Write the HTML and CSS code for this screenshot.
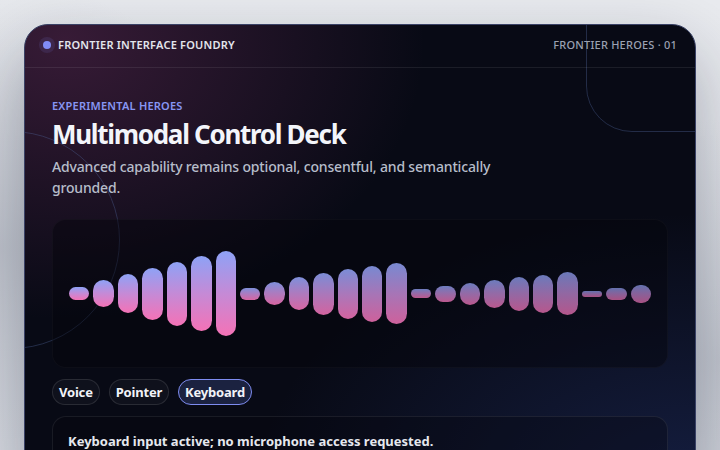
FILE: index.html
```html
<!DOCTYPE html>
<html lang="en">
<head>
<meta charset="utf-8">
<title>Multimodal Control Deck</title>
<link rel="stylesheet" href="styles.css">
</head>
<body>
<main class="card">
  <div class="deco deco-circle"></div>
  <div class="deco deco-rect"></div>
  <header class="card-head">
    <div class="brand"><span class="brand-dot"></span>Frontier Interface Foundry</div>
    <div class="series">Frontier Heroes · 01</div>
  </header>
  <section class="hero">
    <p class="eyebrow">Experimental Heroes</p>
    <h1 class="title">Multimodal Control Deck</h1>
    <p class="lede">Advanced capability remains optional, consentful, and semantically grounded.</p>
    <div class="wave" aria-hidden="true">
      <span class="bar" style="height:13px;opacity:1"></span>
      <span class="bar" style="height:27px;opacity:1"></span>
      <span class="bar" style="height:39px;opacity:1"></span>
      <span class="bar" style="height:52px;opacity:1"></span>
      <span class="bar" style="height:64px;opacity:1"></span>
      <span class="bar" style="height:75px;opacity:1"></span>
      <span class="bar" style="height:85px;opacity:1"></span>
      <span class="bar" style="height:12px;opacity:.88"></span>
      <span class="bar" style="height:23px;opacity:.88"></span>
      <span class="bar" style="height:33px;opacity:.88"></span>
      <span class="bar" style="height:42px;opacity:.86"></span>
      <span class="bar" style="height:50px;opacity:.86"></span>
      <span class="bar" style="height:56px;opacity:.84"></span>
      <span class="bar" style="height:61px;opacity:.84"></span>
      <span class="bar" style="height:9px;opacity:.76"></span>
      <span class="bar" style="height:16px;opacity:.76"></span>
      <span class="bar" style="height:22px;opacity:.75"></span>
      <span class="bar" style="height:28px;opacity:.75"></span>
      <span class="bar" style="height:34px;opacity:.74"></span>
      <span class="bar" style="height:38px;opacity:.74"></span>
      <span class="bar" style="height:43px;opacity:.73"></span>
      <span class="bar" style="height:6px;opacity:.68"></span>
      <span class="bar" style="height:12px;opacity:.68"></span>
      <span class="bar" style="height:18px;opacity:.68"></span>
    </div>
    <div class="modes" role="tablist">
      <button class="mode">Voice</button>
      <button class="mode">Pointer</button>
      <button class="mode is-active">Keyboard</button>
    </div>
    <div class="status">Keyboard input active; no microphone access requested.</div>
  </section>
</main>
</body>
</html>
```

FILE: styles.css
```css
* { box-sizing: border-box; }

html, body {
  margin: 0;
  height: 100%;
  overflow: hidden;
}

body {
  padding: 24px 24px 0;
  font-family: "Noto Sans", "Open Sans", sans-serif;
  background:
    radial-gradient(circle at 0% 55%, rgba(140, 146, 160, 0.4), transparent 35%),
    radial-gradient(circle at 100% 80%, rgba(140, 146, 160, 0.35), transparent 30%),
    linear-gradient(180deg, #e9ebef 0%, #e1e4ea 100%);
}

.card {
  position: relative;
  overflow: hidden;
  width: 672px;
  min-height: 470px;
  border: 1px solid #3a4266;
  border-radius: 24px;
  background:
    radial-gradient(ellipse 360px 280px at 6% 3%, rgba(120, 50, 100, 0.42), transparent 100%),
    radial-gradient(ellipse 440px 280px at 100% 100%, rgba(40, 60, 130, 0.4), transparent 100%),
    #080a15;
  box-shadow: 0 28px 70px rgba(15, 23, 42, 0.32);
  color: #e5e7eb;
}

.deco {
  position: absolute;
  pointer-events: none;
  border: 1px solid rgba(84, 104, 160, 0.36);
}

.deco-circle {
  left: -123px;
  top: 106px;
  width: 218px;
  height: 218px;
  border-radius: 50%;
}

.deco-rect {
  left: 561px;
  top: -133px;
  width: 240px;
  height: 240px;
  border-radius: 46px;
}

.card-head {
  position: relative;
  display: flex;
  align-items: center;
  justify-content: space-between;
  height: 43px;
  padding: 0 18px 3px;
  border-bottom: 1px solid rgba(255, 255, 255, 0.08);
  font-size: 11px;
  letter-spacing: 0.02em;
  text-transform: uppercase;
}

.brand {
  display: flex;
  align-items: center;
  gap: 7px;
  font-weight: 600;
  color: #e3e5ec;
}

.brand-dot {
  width: 8px;
  height: 8px;
  border-radius: 50%;
  background: #818cf8;
  box-shadow: 0 0 0 4px rgba(129, 140, 248, 0.12);
}

.series {
  font-weight: 500;
  color: #9ba1b2;
}

.hero {
  position: relative;
  padding: 30px 27px 27px;
}

.eyebrow {
  margin: 0;
  font-size: 11px;
  line-height: 16px;
  font-weight: 600;
  letter-spacing: 0.02em;
  text-transform: uppercase;
  color: #8796f3;
}

.title {
  margin: 4px 0 0;
  font-size: 26px;
  line-height: 32px;
  font-weight: 700;
  letter-spacing: -0.05em;
  color: #f3f5fa;
}

.lede {
  margin: 6px 0 0;
  max-width: 460px;
  font-size: 14px;
  line-height: 21px;
  font-weight: 500;
  letter-spacing: -0.012em;
  color: #b7bdca;
}

.wave {
  display: flex;
  align-items: center;
  gap: 4px;
  height: 149px;
  margin-top: 21px;
  padding: 0 16px;
  border-radius: 14px;
  border: 1px solid rgba(255, 255, 255, 0.03);
  background: rgba(4, 5, 12, 0.45);
}

.bar {
  flex: 1;
  border-radius: 999px;
  background: linear-gradient(180deg, #8ea2f6 0%, #c58ad6 50%, #f472b6 100%);
}

.modes {
  display: flex;
  gap: 9px;
  margin-top: 11px;
}

.mode {
  height: 26px;
  padding: 0 6px;
  border: 1px solid rgba(255, 255, 255, 0.11);
  border-radius: 999px;
  background: #0f111c;
  color: #f1f3f8;
  font-family: inherit;
  font-size: 13px;
  font-weight: 700;
  letter-spacing: -0.015em;
  cursor: pointer;
}

.mode.is-active {
  border-color: #7e8cf0;
  background: #1b2240;
}

.status {
  margin-top: 11px;
  padding: 15px 15px;
  border: 1px solid rgba(255, 255, 255, 0.08);
  border-radius: 14px;
  background: rgba(6, 7, 14, 0.35);
  font-size: 13px;
  font-weight: 700;
  color: #e6e8ee;
}
```
